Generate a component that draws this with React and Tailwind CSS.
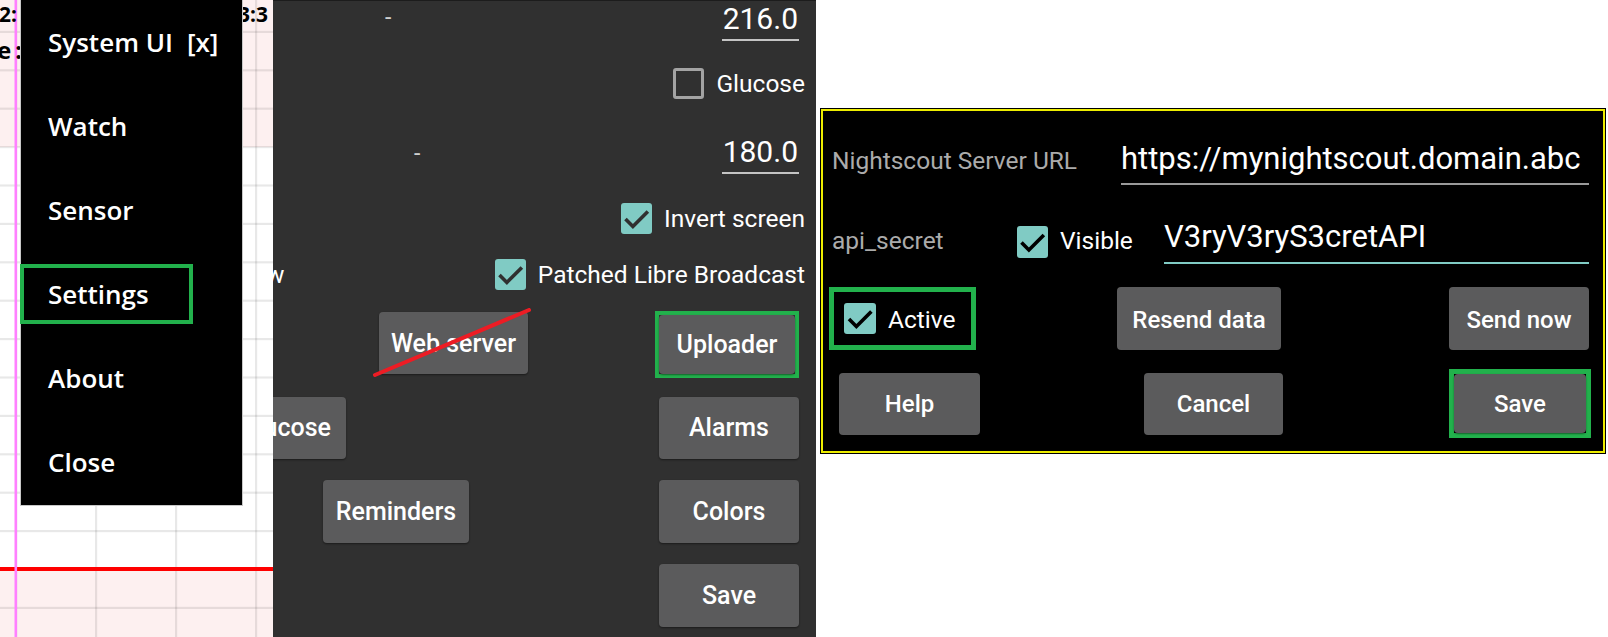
import React from "react";

function Check({ checked, className = "", mark = "#303030" }) {
  if (!checked) {
    return <div className={"rounded-[3px] border-[3px] border-[#a3a3a3] shrink-0 " + className} />;
  }
  return (
    <div className={"rounded-[3px] bg-[#80cbc4] shrink-0 " + className}>
      <svg viewBox="0 0 18 18" className="w-full h-full">
        <polyline points="2.6,9.3 6.9,13.6 15.6,4.9" fill="none" stroke={mark} strokeWidth="2.1" />
      </svg>
    </div>
  );
}

function Btn({ children, className = "" }) {
  return (
    <div
      className={
        "bg-[#5b5b5c] rounded-[4px] flex items-center justify-center text-white font-medium font-['Roboto',sans-serif] shadow-[0_1px_2px_rgba(0,0,0,0.45)] shrink-0 whitespace-nowrap " +
        className
      }
    >
      {children}
    </div>
  );
}

function ChartPanel() {
  const hl = [];
  for (let k = 0; k < 17; k++) {
    const y = 31.8 + 38.4 * k;
    if (k === 14) continue;
    hl.push(<rect key={"h" + k} x="0" y={y - 1} width="273" height="2.2" fill="rgba(0,0,0,0.09)" />);
  }
  const vl = [16, 96, 176, 256].map((x) => (
    <rect key={"v" + x} x={x - 1} y="0" width="2.2" height="637" fill="rgba(0,0,0,0.09)" />
  ));
  const items = ["Watch", "Sensor"];
  return (
    <div className="relative w-[273px] h-[637px] overflow-hidden bg-white shrink-0 font-['Noto_Sans',sans-serif]">
      <svg className="absolute inset-0" width="273" height="637">
        <rect x="0" y="0" width="273" height="147" fill="#fdf0f0" />
        <rect x="0" y="569" width="273" height="68" fill="#fdf0f0" />
        {hl}
        {vl}
        <rect x="0" y="567" width="273" height="4" fill="#ff0000" />
        <rect x="14.5" y="0" width="2.6" height="637" fill="#ff80ff" />
      </svg>
      <span className="absolute left-[-1px] top-[1px] text-[21px] leading-[26px] font-bold text-black">2:</span>
      <span className="absolute left-[238px] top-[1px] text-[21px] leading-[26px] font-bold text-black">3:3</span>
      <div className="absolute left-[-3px] top-[35px] flex text-[24px] leading-[30px] font-bold text-black">
        <span>e</span>
        <span className="ml-[4px]">:</span>
      </div>

      <div className="absolute left-[20px] top-0 w-[223px] h-[506px] bg-black border border-t-0 border-[#c8c8c8] flex flex-col font-['Open_Sans',sans-serif] font-semibold text-white text-[26px] leading-[32px]">
        <div className="h-[84px] flex items-center pl-[27px]">
          <span>System UI</span>
          <span className="ml-[14px]">[x]</span>
        </div>
        {items.map((t) => (
          <div key={t} className="h-[84px] flex items-center pl-[27px]">
            {t}
          </div>
        ))}
        <div className="h-[84px] flex items-center">
          <div className="ml-[-1px] w-[173px] h-[60px] border-4 border-[#22b14c] flex items-center pl-[24px]">Settings</div>
        </div>
        <div className="h-[84px] flex items-center pl-[27px]">About</div>
        <div className="h-[84px] flex items-center pl-[27px]">Close</div>
      </div>
    </div>
  );
}

function SettingsPanel() {
  const lbl = "text-[24.5px] leading-[29px]";
  return (
    <div className="relative w-[543px] h-[637px] bg-[#303030] overflow-hidden shrink-0 font-['Roboto',sans-serif] text-white shadow-[inset_0_1px_0_#1c1c1c]">
      <div className="h-[49px] flex items-start">
        <span className="ml-[112px] mt-[4px] text-[23px] leading-[27px] text-[#d0d0d0]">-</span>
        <div className="ml-auto mr-[17px] mt-[2px] text-[30px] leading-[34px] pb-[3px] border-b-2 border-[#c4c4c4] px-[1px]">216.0</div>
      </div>
      <div className="h-[69px] flex items-center justify-end pr-[11px]">
        <Check checked={false} className="w-[31px] h-[31px]" />
        <span className={"ml-[12px] " + lbl}>Glucose</span>
      </div>
      <div className="h-[69px] flex items-start">
        <span className="ml-[141px] mt-[22px] text-[23px] leading-[27px] text-[#d0d0d0]">-</span>
        <div className="ml-auto mr-[17px] mt-[17px] text-[30px] leading-[34px] pb-[3px] border-b-2 border-[#c4c4c4] px-[1px]">180.0</div>
      </div>
      <div className="h-[63px] flex items-center justify-end pr-[11px]">
        <Check checked className="w-[31px] h-[31px]" />
        <span className={"ml-[12px] " + lbl}>Invert screen</span>
      </div>
      <div className="h-[48px] flex items-center pr-[11px]">
        <span className={"ml-[-7px] " + lbl}>w</span>
        <Check checked className="ml-auto w-[31px] h-[31px]" />
        <span className={"ml-[12px] " + lbl}>Patched Libre Broadcast</span>
      </div>
      <div className="h-[90px] flex items-start">
        <div className="relative ml-[106px] mt-[14px]">
          <Btn className="w-[149px] h-[62px] text-[25px] pt-[2px]">Web server</Btn>
          <svg className="absolute left-[-6px] top-[-4px]" width="160" height="70">
            <line x1="2" y1="67" x2="156" y2="2" stroke="#ed1c24" strokeWidth="4" strokeLinecap="round" />
          </svg>
        </div>
        <div className="ml-auto mr-[17px] mt-[13px] w-[144px] h-[67px] border-4 border-[#22b14c]">
          <Btn className="w-full h-full text-[25px] pt-[1px]">Uploader</Btn>
        </div>
      </div>
      <div className="h-[83px] flex items-start">
        <Btn className="ml-[-66px] mt-[9px] w-[139px] h-[62px] !justify-end pr-[15px] text-[25px]">Glucose</Btn>
        <Btn className="ml-auto mr-[17px] mt-[9px] w-[140px] h-[62px] text-[25px]">Alarms</Btn>
      </div>
      <div className="h-[84px] flex items-start">
        <Btn className="ml-[50px] mt-[9px] w-[146px] h-[63px] text-[25px]">Reminders</Btn>
        <Btn className="ml-auto mr-[17px] mt-[9px] w-[140px] h-[63px] text-[25px]">Colors</Btn>
      </div>
      <div className="flex items-start">
        <Btn className="ml-auto mr-[17px] mt-[9px] w-[140px] h-[63px] text-[25px]">Save</Btn>
      </div>
    </div>
  );
}

function UploaderPanel() {
  return (
    <div className="w-[792px] h-[637px] bg-white pt-[108px] pl-[4px] shrink-0">
      <div className="w-[786px] h-[346px] border border-black">
        <div className="h-full border-2 border-[#eded00] bg-black font-['Roboto',sans-serif] text-white flex flex-col">
          <div className="mt-[30px] flex items-baseline pl-[9px]">
            <span className="w-[289px] text-[24.5px] leading-[28px] text-[#ababab] whitespace-nowrap">Nightscout Server URL</span>
            <div className="w-[468px] text-[31px] leading-[36px] pb-[6px] border-b-2 border-[#9a9a9a] whitespace-nowrap">
              https://mynightscout.domain.abc
            </div>
          </div>
          <div className="mt-[34px] flex items-center pl-[9px]">
            <span className="w-[185px] text-[24.5px] leading-[28px] text-[#ababab] mt-[-2px]">api_secret</span>
            <Check checked mark="#000" className="w-[31px] h-[32px]" />
            <span className="ml-[12px] w-[104px] text-[24.5px] leading-[28px] mt-[-2px]">Visible</span>
            <div className="w-[425px] text-[31px] leading-[36px] pb-[7px] border-b-2 border-[#80cbc4] whitespace-nowrap">
              V3ryV3ryS3cretAPI
            </div>
          </div>
          <div className="mt-[23px] h-[63px] flex pl-[6px]">
            <div className="w-[147px] h-[63px] border-[5px] border-[#22b14c] flex items-center pl-[10px]">
              <Check checked mark="#000" className="w-[32px] h-[31px]" />
              <span className="ml-[12px] text-[24.5px] leading-[28px] pt-[2px]">Active</span>
            </div>
            <Btn className="ml-[141px] w-[164px] h-[63px] text-[24px] pt-[2px]">Resend data</Btn>
            <Btn className="ml-[168px] w-[140px] h-[63px] text-[24px] pt-[2px]">Send now</Btn>
          </div>
          <div className="mt-[19px] h-[69px] flex items-center pl-[16px]">
            <Btn className="w-[141px] h-[62px] text-[24px]">Help</Btn>
            <Btn className="ml-[164px] w-[139px] h-[62px] text-[24px]">Cancel</Btn>
            <div className="ml-[166px] w-[142px] h-[69px] border-[5px] border-[#22b14c]">
              <Btn className="w-full h-full text-[24px]">Save</Btn>
            </div>
          </div>
        </div>
      </div>
    </div>
  );
}

export default function App() {
  return (
    <div className="flex w-[1608px] h-[637px] overflow-hidden bg-white">
      <ChartPanel />
      <SettingsPanel />
      <UploaderPanel />
    </div>
  );
}
